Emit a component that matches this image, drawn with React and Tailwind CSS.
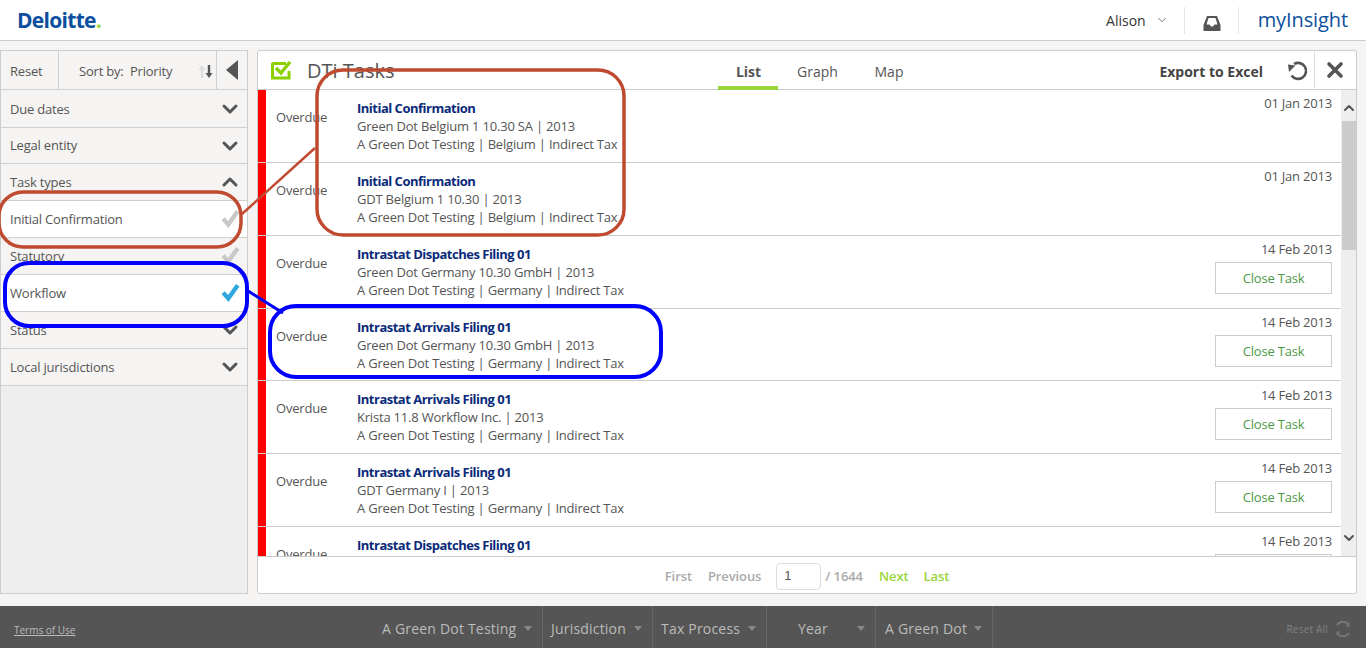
import { ChevronDown, ChevronUp, X } from "lucide-react";

// ── Task rows ─────────────────────────────────────────────────────────────────
const tasks = [
  { title: "Initial Confirmation", sub: "Green Dot Belgium 1 10.30 SA | 2013", meta: "A Green Dot Testing | Belgium | Indirect Tax", date: "01 Jan 2013", close: false },
  { title: "Initial Confirmation", sub: "GDT Belgium 1 10.30 | 2013", meta: "A Green Dot Testing | Belgium | Indirect Tax", date: "01 Jan 2013", close: false },
  { title: "Intrastat Dispatches Filing 01", sub: "Green Dot Germany 10.30 GmbH | 2013", meta: "A Green Dot Testing | Germany | Indirect Tax", date: "14 Feb 2013", close: true },
  { title: "Intrastat Arrivals Filing 01", sub: "Green Dot Germany 10.30 GmbH | 2013", meta: "A Green Dot Testing | Germany | Indirect Tax", date: "14 Feb 2013", close: true },
  { title: "Intrastat Arrivals Filing 01", sub: "Krista 11.8 Workflow Inc. | 2013", meta: "A Green Dot Testing | Germany | Indirect Tax", date: "14 Feb 2013", close: true },
  { title: "Intrastat Arrivals Filing 01", sub: "GDT Germany I | 2013", meta: "A Green Dot Testing | Germany | Indirect Tax", date: "14 Feb 2013", close: true },
  { title: "Intrastat Dispatches Filing 01", sub: "Green Dot Germany 10.30 GmbH | 2013", meta: "A Green Dot Testing | Germany | Indirect Tax", date: "14 Feb 2013", close: true },
];

const footerCells = [
  { label: "A Green Dot Testing", width: "w-[171px]", align: "pl-[10px]" },
  { label: "Jurisdiction", width: "w-[110px]", align: "pl-[8px]" },
  { label: "Tax Process", width: "w-[114px]", align: "pl-[8px]" },
  { label: "Year", width: "w-[109px]", align: "pl-[31px]" },
  { label: "A Green Dot", width: "w-[117px]", align: "pl-[9px]" },
];

// ── Sidebar filter row ────────────────────────────────────────────────────────
function FilterRow({ label, open, height = "h-[37px]", nudge = "pt-[2px]" }) {
  const Icon = open ? ChevronUp : ChevronDown;
  return (
    <div className={`flex ${height} shrink-0 items-center justify-between border-b border-[#cfcfcf] bg-[#f5f4f2] pl-[9px] pr-[5px]`}>
      <span className={nudge}>{label}</span>
      <Icon size={24} strokeWidth={3} className="text-[#555]" />
    </div>
  );
}

function TaskTypeRow({ label, color, white }) {
  return (
    <div className={`flex h-[37px] shrink-0 items-center justify-between border-b border-[#cfcfcf] pl-[9px] pr-[7px] ${white ? "bg-white" : "bg-[#f5f4f2]"}`}>
      <span className="pt-[2px]">{label}</span>
      <svg width="20" height="20" viewBox="0 0 20 20">
        <path d="M1.5 11 L4.8 8.2 L8 12 L16 1 L19.5 3.5 L8.5 19 Z" fill={color} />
      </svg>
    </div>
  );
}

function Sidebar() {
  return (
    <aside className="flex w-[248px] shrink-0 flex-col border border-[#cccccc] bg-[#eeeeee] text-[13px] tracking-[-0.2px] text-[#555]">
      <div className="flex h-[39px] shrink-0 items-center border-b border-[#cfcfcf] bg-[#f5f4f2]">
        <div className="flex h-full w-[58px] items-center border-r border-[#cfcfcf] pl-[9px] pt-[3px]">Reset</div>
        <div className="flex h-full w-[158px] items-center border-r border-[#cfcfcf] pl-[20px]">
          <span className="pt-[3px]">Sort by:&nbsp; Priority</span>
          <svg width="15" height="13" viewBox="0 0 15 13" className="ml-auto mr-[3px] mt-[2px]">
            <path d="M4 0 L7.5 5 H5.3 V13 H2.7 V5 H0.5 Z" fill="#dddddd" />
            <path d="M11 13 L7.5 8 H9.8 V0 H12.2 V8 H14.5 Z" fill="#555555" />
          </svg>
        </div>
        <svg width="14" height="22" viewBox="0 0 14 22" className="ml-[8px]">
          <path d="M13 1 V21 L1 11 Z" fill="#555555" />
        </svg>
      </div>
      <FilterRow label="Due dates" height="h-[38px]" />
      <FilterRow label="Legal entity" height="h-[36px]" nudge="pt-0" />
      <FilterRow label="Task types" open />
      <TaskTypeRow label="Initial Confirmation" color="#c8c8c8" white />
      <TaskTypeRow label="Statutory" color="#c8c8c8" />
      <TaskTypeRow label="Workflow" color="#2ea8de" white />
      <FilterRow label="Status" />
      <FilterRow label="Local jurisdictions" />
    </aside>
  );
}

// ── One task in the list ──────────────────────────────────────────────────────
function TaskRow({ task }) {
  return (
    <div className="flex h-[72.85px] shrink-0 border-b border-[#cccccc] text-[13px] leading-[18px] tracking-[-0.2px] text-[#555]">
      <div className="w-[8px] shrink-0 bg-[#ff0000]" />
      <div className="w-[91px] shrink-0 pl-[10px] pt-[18px]">Overdue</div>
      <div className="flex-1 whitespace-nowrap pt-[9px]">
        <div className="font-bold tracking-[-0.5px] text-[#0a2a7a]">{task.title}</div>
        <div>{task.sub}</div>
        <div>{task.meta}</div>
      </div>
      <div className="flex flex-col items-end pr-[9px] pt-[4.45px]">
        <div>{task.date}</div>
        {task.close && (
          <div className="mt-[4px] flex h-[32px] w-[117px] items-center justify-center border border-[#cccccc] text-[#4c9a45]">
            Close Task
          </div>
        )}
      </div>
    </div>
  );
}

function Scrollbar() {
  return (
    <div className="flex w-[15px] shrink-0 flex-col items-center bg-[#eeeeee]">
      <ChevronUp size={16} strokeWidth={3} className="mt-[10px] shrink-0 text-[#555]" />
      <div className="mt-[5px] h-[129px] w-[14px] shrink-0 bg-[#cccccc]" />
      <ChevronDown size={16} strokeWidth={3} className="mt-auto mb-[10px] shrink-0 text-[#555]" />
    </div>
  );
}

function Toolbar() {
  return (
    <div className="flex h-[39px] shrink-0 items-center border-b border-[#cccccc]">
      <svg width="22" height="20" viewBox="0 0 22 20" className="ml-[13px]">
        <path d="M1.5 3.5 H15 M1.5 3 V18 H18 V11" fill="none" stroke="#8cd000" strokeWidth="3" />
        <path d="M5 8 L10 13 L19 2" fill="none" stroke="#8cd000" strokeWidth="3.5" />
      </svg>
      <span className="ml-[14px] pt-[2px] text-[20px] leading-none text-[#555]">DTi Tasks</span>
      <div className="ml-[324px] flex h-full text-[14px] text-[#555]">
        <div className="flex h-[39px] w-[60px] items-center justify-center border-b-4 border-[#97d53a] pt-[6px] font-bold">List</div>
        <div className="flex w-[78px] items-center justify-center pt-[2px]">Graph</div>
        <div className="flex w-[65px] items-center justify-center pt-[2px]">Map</div>
      </div>
      <span className="ml-auto pt-[2px] text-[14px] font-bold text-[#444]">Export to Excel</span>
      <svg width="22" height="22" viewBox="0 0 22 22" className="ml-[24px] mt-[1px]">
        <path d="M7 4 A8 8 0 1 1 4.5 15.5" fill="none" stroke="#555555" strokeWidth="2.6" />
        <path d="M1 4.5 L8.5 5.5 L2 12 Z" fill="#555555" />
      </svg>
      <div className="ml-[5px] h-[36px] w-px bg-[#dddddd]" />
      <X size={24} strokeWidth={3.6} className="ml-[8px] mr-[9px] text-[#555]" />
    </div>
  );
}

function Pagination() {
  return (
    <div className="flex h-[37px] shrink-0 items-center justify-center border-t border-[#cccccc] pt-[2px] text-[13px] font-semibold tracking-[-0.1px] text-[#aaaaaa]">
      <span className="mt-[2px]">First</span>
      <span className="ml-[16px] mt-[2px]">Previous</span>
      <div className="ml-[15px] flex h-[27px] w-[45px] items-center rounded-[4px] border border-[#dddddd] pl-[7px] font-['Liberation_Sans',sans-serif] font-normal text-[#555]">1</div>
      <span className="ml-[4px] mt-[2px]">/ 1644</span>
      <span className="ml-[16px] mt-[2px] text-[#97d53a]">Next</span>
      <span className="ml-[15px] mt-[2px] text-[#97d53a]">Last</span>
    </div>
  );
}

function Footer() {
  return (
    <footer className="flex h-[42px] shrink-0 items-center whitespace-nowrap bg-[#555555] text-[#bbbbbb]">
      <div className="w-[372px] shrink-0 pl-[14px] pt-[6px] text-[10px] underline">Terms of Use</div>
      {footerCells.map((c) => (
        <div key={c.label} className={`flex h-full ${c.width} shrink-0 items-center border-r border-[#666666] text-[14px] tracking-[0.2px] ${c.align} last:border-r-0`}>
          <span className="pt-[3px]">{c.label}</span>
          <svg width="8" height="5" viewBox="0 0 8 5" className="ml-auto mr-[10px] mt-[3px]">
            <path d="M0 0 H8 L4 5 Z" fill="#888888" />
          </svg>
        </div>
      ))}
      <div className="ml-auto flex items-center pr-[14px] text-[10px] text-[#808080]">
        <span className="pt-[4px] tracking-[0.2px]">Reset All</span>
        <svg width="18" height="18" viewBox="0 0 18 18" className="ml-[6px] mt-[3px]">
          <path d="M15 5 A7.2 7.2 0 0 0 3 5 M3 13 A7.2 7.2 0 0 0 15 13" fill="none" stroke="#777777" strokeWidth="2" />
          <path d="M15.5 2.5 V6.5 H11.5 Z M2.5 15.5 V11.5 H6.5 Z" fill="#777777" />
        </svg>
      </div>
    </footer>
  );
}

// ── Hand-drawn callouts lying over the page ───────────────────────────────────
function Callouts() {
  return (
    <svg width="1366" height="648" viewBox="0 0 1366 648" fill="none" className="pointer-events-none absolute left-0 top-0">
      <g stroke="#c04a30" strokeWidth="3.5">
        <rect x="317" y="70" width="307" height="165" rx="26" />
        <rect x="-1" y="192" width="242" height="55" rx="24" />
        <path d="M242 214 L315 148" strokeWidth="2.5" />
      </g>
      <g stroke="#0000ff" strokeWidth="4">
        <rect x="5" y="263" width="242" height="63" rx="24" />
        <rect x="270" y="306" width="391" height="71" rx="26" />
        <path d="M248 291 L283 313" strokeWidth="3" />
      </g>
    </svg>
  );
}

export default function App() {
  return (
    <div className="relative flex h-[648px] w-[1366px] flex-col overflow-hidden bg-[#f5f4f2] font-['Open_Sans',sans-serif]">
      {/* ── Top bar ───────────────────────────────────────────────── */}
      <header className="flex h-[41px] shrink-0 items-center border-b border-[#cccccc] bg-white">
        <span className="ml-[17px] text-[21px] font-bold leading-none tracking-[-0.7px] text-[#0c4f9e]">
          Deloitte<span className="text-[#97d53a]">.</span>
        </span>
        <span className="ml-auto text-[14px] text-[#333]">Alison</span>
        <ChevronDown size={14} strokeWidth={1.5} className="ml-[9px] text-[#666]" />
        <div className="ml-[15px] h-[27px] w-px bg-[#e5e5e5]" />
        <svg width="18" height="16" viewBox="0 0 18 16" className="ml-[18px] mt-[5px]">
          <path d="M4 1 H14 L17.5 10 V16 H0.5 V10 Z M5.5 3 L3.5 9.5 H6.5 L8 11.5 H10 L11.5 9.5 H14.5 L12.5 3 Z" fill="#555555" fillRule="evenodd" />
        </svg>
        <div className="ml-[17px] h-[27px] w-px bg-[#e5e5e5]" />
        <span className="ml-[19px] mr-[18px] text-[20px] leading-none tracking-[-0.1px] text-[#0c4f9e]">myInsight</span>
      </header>

      {/* ── Body ──────────────────────────────────────────────────── */}
      <div className="flex min-h-0 flex-1 pt-[9px] pb-[12px]">
        <Sidebar />
        <main className="ml-[9px] flex w-[1100px] shrink-0 flex-col overflow-hidden rounded-[3px] border border-[#cccccc] bg-white">
          <Toolbar />
          <div className="flex min-h-0 flex-1">
            <div className="min-w-0 flex-1 overflow-hidden">
              {tasks.map((t, i) => (
                <TaskRow key={i} task={t} />
              ))}
            </div>
            <Scrollbar />
          </div>
          <Pagination />
        </main>
      </div>

      <Footer />
      <Callouts />
    </div>
  );
}
